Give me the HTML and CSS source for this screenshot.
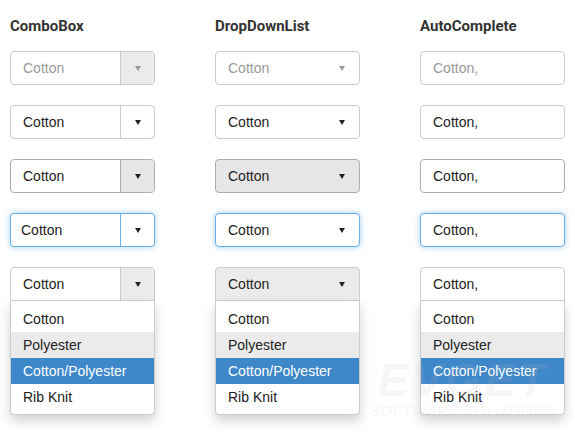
FILE: index.html
```html
<!DOCTYPE html>
<html>
<head>
<meta charset="utf-8">
<link rel="stylesheet" href="styles.css">
</head>
<body>
<div class="page">
  <div class="col">
    <h3 class="title">ComboBox</h3>
    <div class="box combo disabled"><span class="val">Cotton</span><span class="btn"><i class="arrow"></i></span></div>
    <div class="box combo"><span class="val">Cotton</span><span class="btn"><i class="arrow"></i></span></div>
    <div class="box combo hover"><span class="val">Cotton</span><span class="btn"><i class="arrow"></i></span></div>
    <div class="box combo focus"><span class="val shift">Cotton</span><span class="btn"><i class="arrow"></i></span></div>
    <div class="wrap">
      <div class="box combo open"><span class="val">Cotton</span><span class="btn"><i class="arrow"></i></span></div>
      <ul class="popup"><li>Cotton</li><li class="hl">Polyester</li><li class="sel">Cotton/Polyester</li><li>Rib Knit</li></ul>
    </div>
  </div>
  <div class="col">
    <h3 class="title">DropDownList</h3>
    <div class="box ddl disabled"><span class="val">Cotton</span><span class="btn"><i class="arrow"></i></span></div>
    <div class="box ddl"><span class="val">Cotton</span><span class="btn"><i class="arrow"></i></span></div>
    <div class="box ddl hover"><span class="val">Cotton</span><span class="btn"><i class="arrow"></i></span></div>
    <div class="box ddl focus"><span class="val">Cotton</span><span class="btn"><i class="arrow"></i></span></div>
    <div class="wrap">
      <div class="box ddl open"><span class="val">Cotton</span><span class="btn"><i class="arrow"></i></span></div>
      <ul class="popup"><li>Cotton</li><li class="hl">Polyester</li><li class="sel">Cotton/Polyester</li><li>Rib Knit</li></ul>
    </div>
  </div>
  <div class="col">
    <h3 class="title">AutoComplete</h3>
    <div class="box auto disabled"><span class="val">Cotton,</span></div>
    <div class="box auto"><span class="val">Cotton,</span></div>
    <div class="box auto hover"><span class="val">Cotton,</span></div>
    <div class="box auto focus"><span class="val">Cotton,</span></div>
    <div class="wrap">
      <div class="box auto open"><span class="val">Cotton,</span></div>
      <ul class="popup"><li>Cotton</li><li class="hl">Polyester</li><li class="sel">Cotton/Polyester</li><li>Rib Knit</li></ul>
    </div>
  </div>
</div>
<div class="watermark"><div class="wm-big">EVGET</div><div class="wm-small">SOFTWARE SOLUTIONS</div></div>
</body>
</html>
```
FILE: styles.css
```css
html, body { margin: 0; padding: 0; background: #fff; }
body { font-family: "Liberation Sans", Arial, sans-serif; font-size: 14px; color: #333; width: 575px; height: 436px; overflow: hidden; position: relative; }
.page { display: grid; grid-template-columns: repeat(3, 145px); column-gap: 60px; padding: 16px 10px 0 10px; }
.col { display: flex; flex-direction: column; gap: 20px; }
.title { font-family: Roboto, "Liberation Sans", sans-serif; font-weight: bold; font-size: 15px; line-height: 20px; margin: 0 0 -5px 0; color: #333; }
.box { box-sizing: border-box; height: 34px; border: 1px solid #ccc; border-radius: 4px; display: flex; align-items: center; background: #fff; color: #222; overflow: hidden; }
.val { flex: 1; padding-left: 12px; line-height: 32px; }
.val.shift { padding-left: 10px; }
.btn { display: flex; align-items: center; justify-content: center; height: 100%; }
.combo .btn { width: 33px; border-left: 1px solid #ccc; }
.ddl .btn { width: 34px; }
.arrow { display: block; width: 0; height: 0; border-left: 3.5px solid transparent; border-right: 3.5px solid transparent; border-top: 5px solid #222; }
.disabled { color: #999; }
.disabled .arrow { border-top-color: #999; }
.combo.disabled .btn { background: #ebebeb; }
.hover { border-color: #adadad; }
.combo.hover .btn { background: #e6e6e6; border-left-color: #adadad; }
.ddl.hover { background: #e6e6e6; }
.focus { border-color: #66afe9; box-shadow: 0 0 6px rgba(102, 175, 233, 0.6); }
.combo.focus .btn { border-left-color: #66afe9; }
.wrap { position: relative; }
.open { border-radius: 4px 4px 0 0; }
.combo.open .btn { background: #ebebeb; }
.ddl.open { background: #ebebeb; }
.popup { position: absolute; left: 0; right: 0; top: 34px; margin: 0; padding: 5px 0 4px 0; list-style: none; background: #fff; border: 1px solid #ccc; border-top: 0; border-radius: 0 0 4px 4px; box-shadow: 0 6px 12px rgba(0, 0, 0, 0.18); z-index: 2; }
.popup li { height: 26px; line-height: 26px; padding-left: 12px; color: #222; }
.popup .hl { background: #ebebeb; }
.popup .sel { background: #3e87c9; color: #fff; }
.watermark { position: absolute; left: 370px; top: 356px; z-index: 3; pointer-events: none; white-space: nowrap; font-family: "Liberation Sans", sans-serif; font-style: italic; font-weight: bold; color: rgba(190, 190, 200, 0.15); }
.wm-big { font-size: 46px; line-height: 48px; letter-spacing: 3px; padding-left: 8px; }
.wm-small { font-size: 15px; line-height: 16px; font-weight: normal; letter-spacing: 0.5px; margin-top: -1px; }
```
